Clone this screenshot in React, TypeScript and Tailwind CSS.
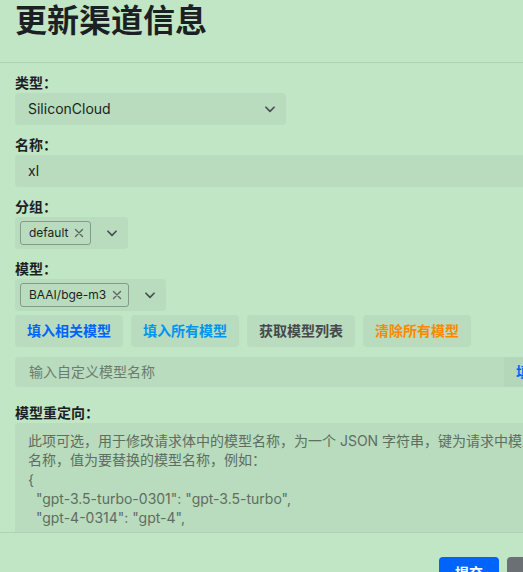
import React from "react";

const FONT = { fontFamily: 'Inter, "Noto Sans CJK SC", sans-serif' };

function Chevron() {
  return (
    <svg width="14" height="14" viewBox="0 0 24 24" fill="none">
      <path
        d="M5 9l7 7 7-7"
        stroke="#4b4f53"
        strokeWidth="3"
        strokeLinecap="round"
        strokeLinejoin="round"
      />
    </svg>
  );
}

function Cross() {
  return (
    <svg width="10" height="10" viewBox="0 0 10 10" fill="none">
      <path d="M1.5 1.5l7 7M8.5 1.5l-7 7" stroke="#5d6560" strokeWidth="1.4" strokeLinecap="round" />
    </svg>
  );
}

function Label({ children }: { children: React.ReactNode }) {
  return <p className="text-sm leading-5 font-bold text-[#1c1f23]">{children}</p>;
}

function TagSelect({ tag }: { tag: string }) {
  return (
    <div className="inline-flex h-8 items-center rounded-[4px] bg-[#b8dcbd] pl-[5px]">
      <span className="inline-flex h-6 items-center gap-[6px] rounded-[3px] border border-[#86998a] pl-2 pr-[6px] text-xs text-[#1c1f23]">
        {tag}
        <Cross />
      </span>
      <span className="ml-[5px] flex h-8 w-8 items-center justify-center">
        <Chevron />
      </span>
    </div>
  );
}

function ActionButton({ text, color }: { text: string; color: string }) {
  return (
    <button className={`h-8 rounded-[4px] bg-[#b8dcbd] px-3 text-sm font-bold ${color}`}>{text}</button>
  );
}

export default function App() {
  // only the lines that show above the footer
  const redirectLines = [
    "此项可选，用于修改请求体中的模型名称，为一个 JSON 字符串，键为请求中模型",
    "名称，值为要替换的模型名称，例如：",
    "{",
    '  "gpt-3.5-turbo-0301": "gpt-3.5-turbo",',
    '  "gpt-4-0314": "gpt-4",',
  ];

  return (
    <div className="h-[572px] w-[523px] overflow-hidden bg-[#c1e6c6]" style={FONT}>
      <div className="flex h-[572px] w-[591px] flex-col">
        {/* Header */}
        <div className="h-[63px] shrink-0 border-b border-[#aed2b3] pl-[15px]">
          <h1 className="text-[32px] leading-[42px] font-bold text-[#1c1f23]">更新渠道信息</h1>
        </div>

        {/* Body */}
        <div className="h-[469px] shrink-0 overflow-hidden pl-[15px] pt-[10px]">
          <div className="flex w-[541px] flex-col">
            <Label>类型：</Label>
            <div className="flex h-8 w-[271px] items-center justify-between rounded-[4px] bg-[#b8dcbd] pl-[13px]">
              <span className="text-sm text-[#1c1f23]">SiliconCloud</span>
              <span className="flex h-8 w-8 items-center justify-center">
                <Chevron />
              </span>
            </div>

            <div className="mt-[10px]">
              <Label>名称：</Label>
              <div className="flex h-8 items-center rounded-[4px] bg-[#b8dcbd] pl-[13px] text-sm text-[#1c1f23]">
                xl
              </div>
            </div>

            <div className="mt-[10px]">
              <Label>分组：</Label>
              <TagSelect tag="default" />
            </div>

            <div className="mt-[10px]">
              <Label>模型：</Label>
              <TagSelect tag="BAAI/bge-m3" />
            </div>

            <div className="mt-1 flex gap-2">
              <ActionButton text="填入相关模型" color="text-[#0064fa]" />
              <ActionButton text="填入所有模型" color="text-[#0095ee]" />
              <ActionButton text="获取模型列表" color="text-[#45494d]" />
              <ActionButton text="清除所有模型" color="text-[#fc8800]" />
            </div>

            <div className="mt-[10px] flex h-[30px]">
              <div className="flex flex-1 items-center rounded-l-[4px] bg-[#b8dcbd] pl-[14px] text-sm text-[#6c7b6f]">
                输入自定义模型名称
              </div>
              <button className="rounded-r-[4px] bg-[#b3d7b8] px-3 text-sm font-bold text-[#0064fa]">填入</button>
            </div>

            <div className="mt-4">
              <Label>模型重定向：</Label>
              <div className="h-[120px] overflow-hidden rounded-t-[4px] bg-[#b8dcbd] px-[13px] pt-2">
                {redirectLines.map((line, i) => (
                  <p key={i} className="whitespace-pre text-sm leading-[19.3px] text-[#5f6d62]">
                    {line}
                  </p>
                ))}
              </div>
            </div>
          </div>
        </div>

        {/* Footer */}
        <div className="flex shrink-0 justify-end gap-2 border-t border-[#aed2b3] pt-6 pr-6">
          <button className="h-8 w-[60px] rounded-[4px] bg-[#0064fa] text-sm font-bold text-white">提交</button>
          <button className="h-8 w-[60px] rounded-[4px] bg-[#6b7075] text-sm font-bold text-white">取消</button>
        </div>
      </div>
    </div>
  );
}
